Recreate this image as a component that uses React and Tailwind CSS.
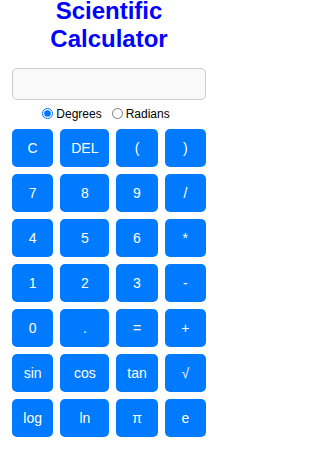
import { useState } from 'react';

const KEYS = [
  ['C', 'DEL', '(', ')'],
  ['7', '8', '9', '/'],
  ['4', '5', '6', '*'],
  ['1', '2', '3', '-'],
  ['0', '.', '=', '+'],
  ['sin', 'cos', 'tan', '√'],
  ['log', 'ln', 'π', 'e'],
];

export default function App() {
  const [display, setDisplay] = useState('');
  const [mode, setMode] = useState('deg');

  function handleKey(k) {
    if (k === 'C') return setDisplay('');
    if (k === 'DEL') return setDisplay((d) => d.slice(0, -1));
    if (k === '=') return; // evaluation not needed for the mock
    setDisplay((d) => d + k);
  }

  return (
    <div className="min-h-[451px] w-[217px] bg-white font-['Liberation_Sans',Arial,sans-serif] text-black">
      <div className="mx-[12px] w-[194px] flex flex-col">
        {/* ── Title ─────────────────────────────────────── */}
        <h1 className="mt-[-3px] text-center text-[24px] leading-[28px] font-bold text-[#0000ff]">
          Scientific Calculator
        </h1>

        {/* ── Display ───────────────────────────────────── */}
        <input
          readOnly
          value={display}
          className="mt-[15px] h-[32px] w-full rounded-[5px] border border-[#cccccc] bg-[#f9f9f9] px-2 text-right text-[16px] outline-none"
        />

        {/* ── Angle mode ────────────────────────────────── */}
        <div className="mt-[7px] flex h-[13px] items-center justify-center pr-[6px] text-[12px] leading-[14px]">
          <label className="flex items-center">
            <input
              type="radio"
              name="mode"
              checked={mode === 'deg'}
              onChange={() => setMode('deg')}
              className="m-0 h-[11px] w-[11px]"
            />
            <span className="ml-[3px]">Degrees</span>
          </label>
          <label className="ml-[10px] flex items-center">
            <input
              type="radio"
              name="mode"
              checked={mode === 'rad'}
              onChange={() => setMode('rad')}
              className="m-0 h-[11px] w-[11px]"
            />
            <span className="ml-[3px]">Radians</span>
          </label>
        </div>

        {/* ── Keypad ────────────────────────────────────── */}
        <div className="mt-[9px] grid grid-cols-[1fr_49px_1fr_1fr] gap-[7px]">
          {KEYS.flat().map((k) => (
            <button
              key={k}
              onClick={() => handleKey(k)}
              className="flex h-[38px] items-center justify-center rounded-[5px] bg-[#007bff] text-[14px] text-white"
            >
              {k}
            </button>
          ))}
        </div>
      </div>
    </div>
  );
}
